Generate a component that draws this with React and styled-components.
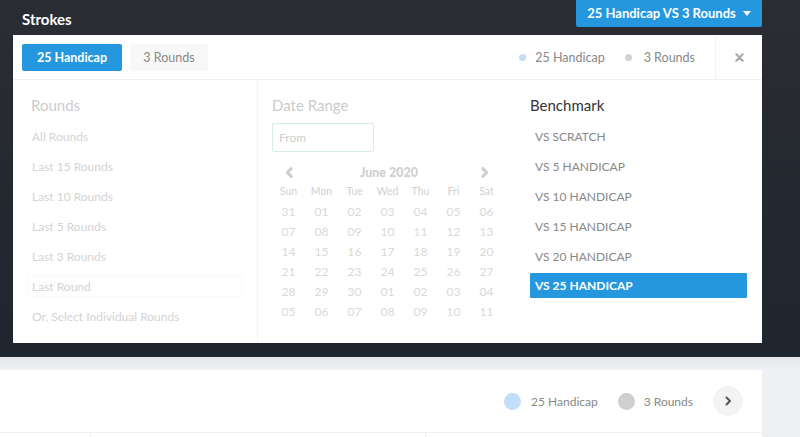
import React from "react"
import styled, { createGlobalStyle } from "styled-components"

const GlobalStyle = createGlobalStyle`
  html, body { margin: 0; padding: 0; }
  body {
    font-family: Lato, "Open Sans", sans-serif;
    background: #eef0f4;
    width: 800px;
    height: 437px;
    overflow: hidden;
  }
`

const BLUE = "#2497de"

const Screen = styled.div`
  width: 800px;
  height: 437px;
  display: flex;
  flex-direction: column;
`

const Header = styled.div`
  height: 357px;
  padding: 0 38px 0 13px;
  box-sizing: border-box;
  background: linear-gradient(180deg, #2b2d32 0%, #232830 60%, #1f2630 100%);
  display: flex;
  flex-direction: column;
`

const TopRow = styled.div`
  height: 35px;
  display: flex;
  justify-content: space-between;
  align-items: flex-start;
`

const Title = styled.div`
  color: #fff;
  font-size: 15px;
  font-weight: 700;
  padding: 10px 0 0 9px;
`

const DropButton = styled.button`
  height: 27px;
  width: 186px;
  border: none;
  border-radius: 0 0 2px 2px;
  background: ${BLUE};
  color: #fff;
  font-family: inherit;
  font-size: 13px;
  font-weight: 700;
  display: flex;
  align-items: center;
  justify-content: center;
  gap: 7px;
  padding: 0 0 2px;
  white-space: nowrap;
`

const Caret = styled.span`
  width: 0;
  height: 0;
  border-left: 4px solid transparent;
  border-right: 4px solid transparent;
  border-top: 5px solid #fff;
  margin-top: 1px;
`

const Panel = styled.div`
  height: 308px;
  background: #fff;
  display: flex;
  flex-direction: column;
`

const TabBar = styled.div`
  height: 45px;
  display: flex;
  align-items: center;
  border-bottom: 1px solid #f0f0f0;
  box-sizing: border-box;
  padding-left: 9px;
`

const Tab = styled.div`
  height: 27px;
  width: ${(p) => p.$w}px;
  margin-right: 8px;
  display: flex;
  align-items: center;
  justify-content: center;
  box-sizing: border-box;
  border-radius: 2px;
  white-space: nowrap;
  font-size: 12.5px;
  font-weight: ${(p) => (p.$active ? 700 : 400)};
  background: ${(p) => (p.$active ? BLUE : "#f8f8f8")};
  color: ${(p) => (p.$active ? "#fff" : "#888")};
`

const Legend = styled.div`
  margin-left: auto;
  display: flex;
  align-items: center;
  height: 100%;
`

const LegendItem = styled.div`
  display: flex;
  align-items: center;
  white-space: nowrap;
  font-size: ${(p) => p.$fs || 12.5}px;
  color: #888;
  margin-right: ${(p) => p.$mr}px;
`

const Dot = styled.span`
  width: ${(p) => p.$size}px;
  height: ${(p) => p.$size}px;
  border-radius: 50%;
  background: ${(p) => p.$color};
  margin-right: ${(p) => p.$gap}px;
`

const CloseCell = styled.div`
  width: 46px;
  height: 100%;
  border-left: 1px solid #f2f2f2;
  display: flex;
  align-items: center;
  justify-content: center;
`

const Body = styled.div`
  flex: 1;
  display: flex;
`

const Column = styled.div`
  width: ${(p) => p.$w}px;
  box-sizing: border-box;
  padding: 16px ${(p) => p.$pr || 0}px 0 ${(p) => p.$pl}px;
  border-left: ${(p) => (p.$divider ? "1px solid #f3f3f3" : "none")};
`

const ColTitle = styled.div`
  font-size: 15px;
  color: ${(p) => (p.$dark ? "#333" : "#ccc")};
  height: 18px;
  line-height: 18px;
  margin-bottom: 7px;
`

const RoundItem = styled.div`
  display: flex;
  align-items: center;
  font-size: 12px;
  color: #d4d4d4;
  margin-left: -4px;
  padding-left: 4px;
  box-sizing: border-box;
  border: 1px solid ${(p) => (p.$hover ? "#fafafa" : "transparent")};
  background: ${(p) => (p.$hover ? "#fefefe" : "transparent")};
  height: ${(p) => (p.$hover ? "22px" : "30px")};
  margin-top: ${(p) => (p.$hover ? "4px" : "0")};
  margin-bottom: ${(p) => (p.$hover ? "4px" : "0")};
`

const DateInput = styled.div`
  width: 102px;
  height: 29px;
  box-sizing: border-box;
  border: 1px solid #d6ecea;
  border-radius: 2px;
  display: flex;
  align-items: center;
  padding-left: 6px;
  font-size: 12px;
  color: #ccc;
  margin-top: 9px;
`

const Calendar = styled.div`
  width: 231px;
  margin-top: 11px;
`

const MonthRow = styled.div`
  height: 18px;
  display: flex;
  align-items: center;
  justify-content: space-between;
  padding: 0 13px 0 12px;
`

const Month = styled.div`
  font-size: 12.5px;
  font-weight: 900;
  color: #cfcfcf;
  margin-left: 4px;
`

const Grid = styled.div`
  display: grid;
  grid-template-columns: repeat(7, 33px);
  grid-auto-rows: 20px;
`

const Cell = styled.div`
  display: flex;
  align-items: center;
  justify-content: center;
  font-size: ${(p) => (p.$head ? "10.5px" : "12px")};
  color: ${(p) => (p.$head ? "#d0d0d0" : "#d9d9d9")};
`

const BenchItem = styled.div`
  height: ${(p) => (p.$active ? "25px" : "30px")};
  margin-top: ${(p) => (p.$active ? "2px" : "0")};
  display: flex;
  align-items: center;
  padding-left: 5px;
  border-radius: 1px;
  font-size: 12px;
  font-weight: ${(p) => (p.$active ? 700 : 400)};
  color: ${(p) => (p.$active ? "#fff" : "#888")};
  background: ${(p) => (p.$active ? BLUE : "transparent")};
`

const Page = styled.div`
  flex: 1;
  padding-top: 13px;
  background: linear-gradient(180deg, #e4e6ea 0px, #eef0f4 13px);
  display: flex;
`

const Card = styled.div`
  width: 762px;
  background: #fff;
  display: flex;
  flex-direction: column;
`

const CardLegend = styled.div`
  height: 62px;
  display: flex;
  align-items: center;
  justify-content: flex-end;
  padding-right: 19px;
  border-bottom: 1px solid #f0f0f0;
`

const NextButton = styled.div`
  width: 30px;
  height: 30px;
  border-radius: 50%;
  background: #f3f3f3;
  display: flex;
  align-items: center;
  justify-content: center;
`

const TableHead = styled.div`
  display: grid;
  grid-template-columns: 90px 335px 1fr;
  flex: 1;
  & > div + div { border-left: 1px solid #f0f0f0; }
`

const Chevron = ({ dir = "right", color = "#666", size = 10, w = 2.4 }) => (
  <svg width={size} height={size} viewBox="0 0 10 10">
    <path
      d={dir === "right" ? "M3.5 1.5 L7 5 L3.5 8.5" : "M6.5 1.5 L3 5 L6.5 8.5"}
      fill="none"
      stroke={color}
      strokeWidth={w}
      strokeLinecap="round"
      strokeLinejoin="round"
    />
  </svg>
)

const CloseIcon = () => (
  <svg width="9" height="9" viewBox="0 0 10 10">
    <path d="M1.5 1.5 L8.5 8.5 M8.5 1.5 L1.5 8.5" stroke="#aaa" strokeWidth="2.4" strokeLinecap="round" />
  </svg>
)

const rounds = [
  "All Rounds",
  "Last 15 Rounds",
  "Last 10 Rounds",
  "Last 5 Rounds",
  "Last 3 Rounds",
  "Last Round",
  "Or, Select Individual Rounds",
]

const benchmarks = [
  "VS SCRATCH",
  "VS 5 HANDICAP",
  "VS 10 HANDICAP",
  "VS 15 HANDICAP",
  "VS 20 HANDICAP",
  "VS 25 HANDICAP",
]

const days = ["Sun", "Mon", "Tue", "Wed", "Thu", "Fri", "Sat"]
const pad = (n) => String(n).padStart(2, "0")
const dates = [
  31,
  ...Array.from({ length: 30 }, (_, i) => i + 1),
  ...Array.from({ length: 11 }, (_, i) => i + 1),
].map(pad)

export default function App() {
  return (
    <Screen>
      <GlobalStyle />
      <Header>
        <TopRow>
          <Title>Strokes</Title>
          <DropButton>
            25 Handicap VS 3 Rounds <Caret />
          </DropButton>
        </TopRow>
        <Panel>
          <TabBar>
            <Tab $active $w={100}>25 Handicap</Tab>
            <Tab $w={78}>3 Rounds</Tab>
            <Legend>
              <LegendItem $mr={20}>
                <Dot $size={7} $color="#c3dcf5" $gap={9} />
                25 Handicap
              </LegendItem>
              <LegendItem $mr={20}>
                <Dot $size={7} $color="#d3d3d3" $gap={12} />
                3 Rounds
              </LegendItem>
              <CloseCell>
                <CloseIcon />
              </CloseCell>
            </Legend>
          </TabBar>
          <Body>
            <Column $w={244} $pl={18} $pr={14}>
              <ColTitle>Rounds</ColTitle>
              {rounds.map((r) => (
                <RoundItem key={r} $hover={r === "Last Round"}>
                  {r}
                </RoundItem>
              ))}
            </Column>
            <Column $w={259} $pl={14} $divider>
              <ColTitle>Date Range</ColTitle>
              <DateInput>From</DateInput>
              <Calendar>
                <MonthRow>
                  <Chevron dir="left" color="#cfcfcf" size={11} w={2.8} />
                  <Month>June 2020</Month>
                  <Chevron dir="right" color="#cfcfcf" size={11} w={2.8} />
                </MonthRow>
                <Grid>
                  {days.map((d) => (
                    <Cell key={d} $head>
                      {d}
                    </Cell>
                  ))}
                  {dates.map((d, i) => (
                    <Cell key={i}>{d}</Cell>
                  ))}
                </Grid>
              </Calendar>
            </Column>
            <Column $w={246} $pl={14} $pr={15}>
              <ColTitle $dark>Benchmark</ColTitle>
              {benchmarks.map((b) => (
                <BenchItem key={b} $active={b === "VS 25 HANDICAP"}>
                  {b}
                </BenchItem>
              ))}
            </Column>
          </Body>
        </Panel>
      </Header>
      <Page>
        <Card>
          <CardLegend>
            <LegendItem $mr={20} $fs={12}>
              <Dot $size={17} $color="#c3defa" $gap={10} />
              25 Handicap
            </LegendItem>
            <LegendItem $mr={20} $fs={12}>
              <Dot $size={17} $color="#cfcfcf" $gap={9} />
              3 Rounds
            </LegendItem>
            <NextButton>
              <Chevron dir="right" color="#555" size={10} w={2} />
            </NextButton>
          </CardLegend>
          <TableHead>
            <div />
            <div />
            <div />
          </TableHead>
        </Card>
      </Page>
    </Screen>
  )
}
